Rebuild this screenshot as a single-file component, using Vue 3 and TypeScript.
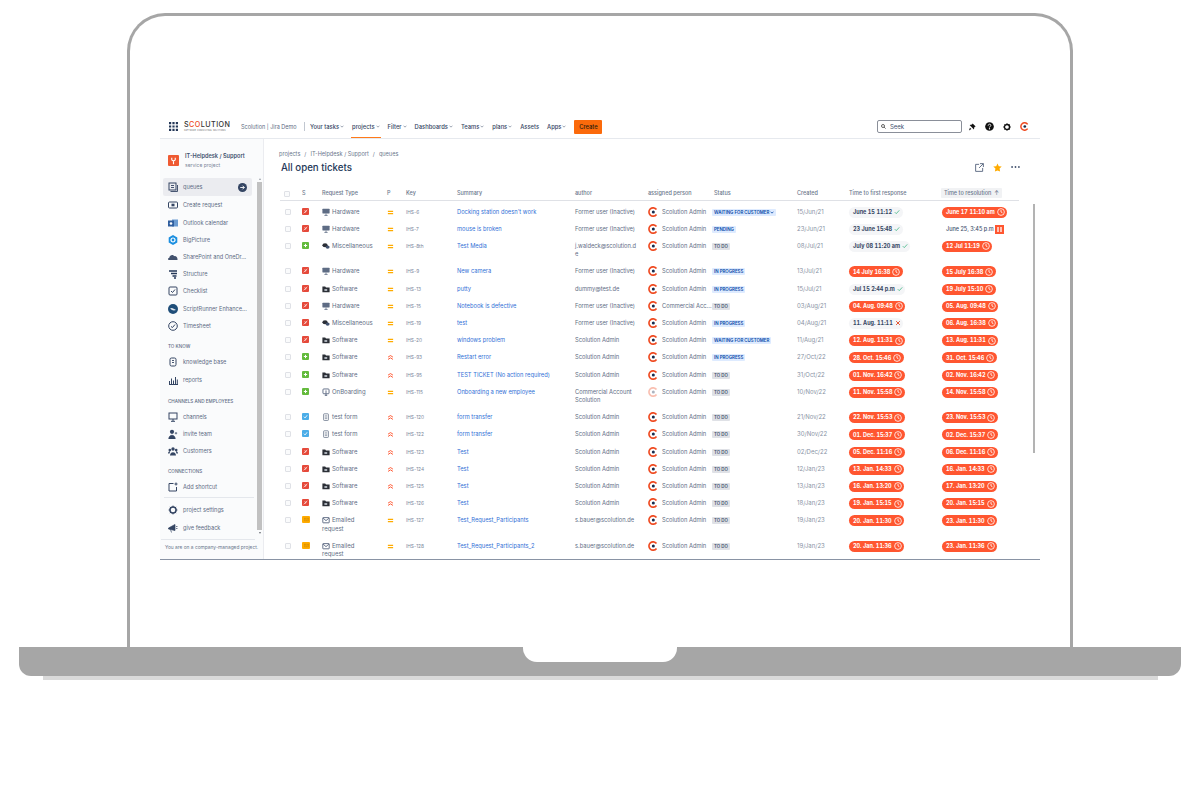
<script setup lang="ts">
type Ticket = {
  kind: 'bug' | 'add' | 'task' | 'mail'
  reqIcon: 'monitor' | 'folder' | 'chat' | 'board' | 'form' | 'mail'
  reqType: string
  prio: 'medium' | 'high'
  key: string
  summary: string
  author: string
  assignee: string
  fadedAvatar?: boolean
  status: string
  statusTone: 'blue' | 'grey'
  caret?: boolean
  created: string
  first: string
  firstState: 'ok' | 'fail' | 'late'
  res: string
  resPaused?: boolean
  tall?: boolean
}

const mainMenu = [
  { label: 'Your tasks', caret: true },
  { label: 'projects', caret: true, active: true },
  { label: 'Filter', caret: true },
  { label: 'Dashboards', caret: true },
  { label: 'Teams', caret: true },
  { label: 'plans', caret: true },
  { label: 'Assets', caret: false },
  { label: 'Apps', caret: true }
]

const admin = 'Scolution Admin'
const former = 'Former user (Inactive)'

function t(
  kind: Ticket['kind'], reqIcon: Ticket['reqIcon'], reqType: string, prio: Ticket['prio'], key: string,
  summary: string, author: string, status: string, created: string, first: string,
  firstState: Ticket['firstState'], res: string, extra: Partial<Ticket> = {}
): Ticket {
  const statusTone = status === 'TO DO' ? 'grey' : 'blue'
  return { kind, reqIcon, reqType, prio, key, summary, author, assignee: admin, status, statusTone, created, first, firstState, res, ...extra }
}

const tickets: Ticket[] = [
  t('bug', 'monitor', 'Hardware', 'medium', 'IHS-6', "Docking station doesn't work", former, 'WAITING FOR CUSTOMER', '15/Jun/21', 'June 15 11:12', 'ok', 'June 17 11:10 am', { caret: true }),
  t('bug', 'monitor', 'Hardware', 'medium', 'IHS-7', 'mouse is broken', former, 'PENDING', '23/Jun/21', '23 June 15:48', 'ok', 'June 25, 3:45 p.m', { resPaused: true }),
  t('add', 'chat', 'Miscellaneous', 'medium', 'IHS-8th', 'Test Media', 'j.waldeck@scolution.de', 'TO DO', '08/Jul/21', 'July 08 11:20 am', 'ok', '12 Jul 11:19', { tall: true }),
  t('bug', 'monitor', 'Hardware', 'medium', 'IHS-9', 'New camera', former, 'IN PROGRESS', '13/Jul/21', '14 July 16:38', 'late', '15 July 16:38'),
  t('bug', 'folder', 'Software', 'medium', 'IHS-13', 'putty', 'dummy@test.de', 'IN PROGRESS', '15/Jul/21', 'Jul 15 2:44 p.m', 'ok', '19 July 15:10'),
  t('bug', 'monitor', 'Hardware', 'medium', 'IHS-15', 'Notebook is defective', former, 'TO DO', '03/Aug/21', '04. Aug. 09:48', 'late', '05. Aug. 09:48', { assignee: 'Commercial Acc...' }),
  t('bug', 'chat', 'Miscellaneous', 'medium', 'IHS-19', 'test', former, 'IN PROGRESS', '04/Aug/21', '11. Aug. 11:11', 'fail', '06. Aug. 16:38'),
  t('bug', 'folder', 'Software', 'medium', 'IHS-20', 'windows problem', admin, 'WAITING FOR CUSTOMER', '11/Aug/21', '12. Aug. 11:31', 'late', '13. Aug. 11:31'),
  t('add', 'folder', 'Software', 'high', 'IHS-93', 'Restart error', admin, 'IN PROGRESS', '27/Oct/22', '28. Oct. 15:46', 'late', '31. Oct. 15:46'),
  t('add', 'folder', 'Software', 'high', 'IHS-95', 'TEST TICKET (No action required)', admin, 'TO DO', '31/Oct/22', '01. Nov. 16:42', 'late', '02. Nov. 16:42'),
  t('add', 'board', 'OnBoarding', 'medium', 'IHS-115', 'Onboarding a new employee', 'Commercial Account Scolution', 'TO DO', '10/Nov/22', '11. Nov. 15:58', 'late', '14. Nov. 15:58', { fadedAvatar: true, tall: true }),
  t('task', 'form', 'test form', 'high', 'IHS-120', 'form transfer', admin, 'TO DO', '21/Nov/22', '22. Nov. 15:53', 'late', '23. Nov. 15:53'),
  t('task', 'form', 'test form', 'high', 'IHS-122', 'form transfer', admin, 'TO DO', '30/Nov/22', '01. Dec. 15:37', 'late', '02. Dec. 15:37'),
  t('bug', 'folder', 'Software', 'high', 'IHS-123', 'Test', admin, 'TO DO', '02/Dec/22', '05. Dec. 11:16', 'late', '06. Dec. 11:16'),
  t('bug', 'folder', 'Software', 'high', 'IHS-124', 'Test', admin, 'TO DO', '12/Jan/23', '13. Jan. 14:33', 'late', '16. Jan. 14:33'),
  t('bug', 'folder', 'Software', 'high', 'IHS-125', 'Test', admin, 'TO DO', '13/Jan/23', '16. Jan. 13:20', 'late', '17. Jan. 13:20'),
  t('bug', 'folder', 'Software', 'high', 'IHS-126', 'Test', admin, 'TO DO', '18/Jan/23', '19. Jan. 15:15', 'late', '20. Jan. 15:15'),
  t('mail', 'mail', 'Emailed request', 'medium', 'IHS-127', 'Test_Request_Participants', 's.bauer@scolution.de', 'TO DO', '19/Jan/23', '20. Jan. 11:30', 'late', '23. Jan. 11:30', { tall: true }),
  t('mail', 'mail', 'Emailed request', 'medium', 'IHS-128', 'Test_Request_Participants_2', 's.bauer@scolution.de', 'TO DO', '19/Jan/23', '20. Jan. 11:36', 'late', '23. Jan. 11:36', { tall: true })
]

const columns = ['', 'S', 'Request Type', 'P', 'Key', 'Summary', 'author', 'assigned person', 'Status', 'Created', 'Time to first response']
</script>

<template>
  <div class="page">
    <div class="lid">
      <div class="screen">
        <header class="topbar">
          <svg class="apps" viewBox="0 0 9 9" width="9" height="9">
            <path fill="#253858" d="M0 0h2.2v2.2H0zM3.4 0h2.2v2.2H3.4zM6.8 0H9v2.2H6.8zM0 3.4h2.2v2.2H0zM3.4 3.4h2.2v2.2H3.4zM6.8 3.4H9v2.2H6.8zM0 6.8h2.2V9H0zM3.4 6.8h2.2V9H3.4zM6.8 6.8H9V9H6.8z" />
          </svg>
          <div class="brand">
            <div class="brand__word">S<span class="brand__hot">CO</span>LUTION</div>
            <div class="brand__tag">SOFTWARE. CONSULTING. SOLUTIONS</div>
          </div>
          <span class="site">Scolution | Jira Demo</span>
          <span class="divider" />
          <nav class="menu">
            <span v-for="m in mainMenu" :key="m.label" class="menu__item" :class="{ 'menu__item--on': m.active }">
              {{ m.label }}
              <svg v-if="m.caret" viewBox="0 0 6 4" width="4" height="3"><path d="M.8.8 3 3l2.2-2.2" fill="none" stroke="currentColor" stroke-width="1" /></svg>
            </span>
          </nav>
          <button type="button" class="create">Create</button>
          <div class="search">
            <svg viewBox="0 0 10 10" width="5" height="5"><circle cx="4" cy="4" r="3" fill="none" stroke="#222" stroke-width="1.4" /><path d="m6.2 6.2 3 3" stroke="#222" stroke-width="1.4" /></svg>
            <span>Seek</span>
          </div>
          <svg class="top-icon" viewBox="0 0 10 10" width="8" height="8"><path fill="#111" d="M5.8.6 9.6 4.400 8 5l-.6 3L2 2.600 5 2zM2.400 5.800 4.200 7.600 1.200 9.400z" /></svg>
          <svg class="top-icon" viewBox="0 0 10 10" width="9" height="9"><circle cx="5" cy="5" r="4.800" fill="#111" /><path d="M3.500 4c0-2 3-2 3-.2 0 1.100-1.500 1.100-1.500 2.300" fill="none" stroke="#fff" stroke-width="1" /><circle cx="5" cy="7.500" r=".7" fill="#fff" /></svg>
          <svg class="top-icon" viewBox="0 0 10 10" width="8" height="8"><circle cx="5" cy="5" r="3.200" fill="none" stroke="#111" stroke-width="1.800" /><path d="M5 .4v1.400M5 8.200v1.400M.4 5h1.400M8.200 5h1.400M1.800 1.800l1 1M7.200 7.200l1 1M8.200 1.800l-1 1M2.800 7.200l-1 1" stroke="#111" stroke-width="1.200" /></svg>
          <svg class="top-icon top-icon--last" viewBox="0 0 12 12" width="9" height="9"><path d="M10.200 3.100A5 5 0 1 0 10.200 8.900" fill="none" stroke="#ef4b22" stroke-width="2" /><circle cx="6.400" cy="6" r="1.800" fill="#172b4d" /></svg>
        </header>

        <div class="body">
          <aside class="side">
            <div class="project">
              <span class="project__logo">
                <svg viewBox="0 0 10 11" width="7" height="8"><path d="M2.500.8v2.700c0 1.200 1 1.800 2.500 1.800s2.500-.6 2.500-1.800V.8M5 5.300V10" fill="none" stroke="#fff" stroke-width="1.600" /></svg>
              </span>
              <div>
                <div class="project__name">IT-Helpdesk / Support</div>
                <div class="project__type">service project</div>
              </div>
            </div>

            <div class="side__scroll">
              <div class="side__list">
                <a class="nav nav--on">
                  <svg viewBox="0 0 10 10" class="nav__ico"><rect x="1" y="1" width="7" height="7" fill="none" stroke="#344563" stroke-width="1" /><path d="M3 3.500h3M3 5.500h3M2.500 9.500h7V3" fill="none" stroke="#344563" stroke-width=".9" /></svg>
                  queues
                  <svg viewBox="0 0 10 10" class="nav__go"><circle cx="5" cy="5" r="5" fill="#344563" /><path d="M2.500 5h4.500M5 3l2 2-2 2" fill="none" stroke="#fff" stroke-width="1" /></svg>
                </a>
                <a class="nav"><svg viewBox="0 0 10 10" class="nav__ico"><rect x=".5" y="2" width="9" height="6" rx="1" fill="none" stroke="#344563" stroke-width="1" /><rect x="3.500" y="3.700" width="3" height="2.600" fill="#344563" /></svg>Create request</a>
                <a class="nav"><svg viewBox="0 0 10 10" class="nav__ico"><rect x="4" y="1.500" width="6" height="7" fill="#6b9bd1" /><rect x="0" y="2.500" width="6" height="6" fill="#2f5e9e" /><circle cx="3" cy="5.500" r="1.300" fill="#fff" /></svg>Outlook calendar</a>
                <a class="nav"><svg viewBox="0 0 10 10" class="nav__ico"><path d="M5 0 9.300 2.500v5L5 10 .7 7.500v-5z" fill="#1b8fe0" /><circle cx="5" cy="5" r="2" fill="none" stroke="#fff" stroke-width="1.200" /></svg>BigPicture</a>
                <a class="nav"><svg viewBox="0 0 10 10" class="nav__ico"><path d="M1 8c-1.300 0-1.300-2.200.3-2.300C1.700 3 5 2 6.200 4.200 8 3.700 9.800 5.500 9.500 8z" fill="#42526e" /></svg>SharePoint and OneDr...</a>
                <a class="nav"><svg viewBox="0 0 10 10" class="nav__ico"><path d="M1 2h8M3 4.500h6M4.500 7h4M6 9h2" stroke="#253858" stroke-width="1.300" /></svg>Structure</a>
                <a class="nav"><svg viewBox="0 0 10 10" class="nav__ico"><rect x="1" y="1" width="8" height="8" rx="1" fill="none" stroke="#344563" stroke-width="1" /><path d="m3 5 1.500 1.500L7 3.500" fill="none" stroke="#344563" stroke-width="1" /></svg>Checklist</a>
                <a class="nav"><svg viewBox="0 0 10 10" class="nav__ico"><circle cx="5" cy="5" r="5" fill="#1f4e79" /><path d="M2 4.500c2-1.500 3.500 0 6 1.500-2 1-4 .5-6-1.500z" fill="#dfe6ee" /></svg>ScriptRunner Enhance...</a>
                <a class="nav"><svg viewBox="0 0 10 10" class="nav__ico"><circle cx="5" cy="5" r="4.300" fill="none" stroke="#344563" stroke-width="1" /><path d="m3 5.500 1.500 1L7 3.500" fill="none" stroke="#344563" stroke-width="1" /></svg>Timesheet</a>

                <div class="group group--know">TO KNOW</div>
                <a class="nav nav--gap"><svg viewBox="0 0 10 10" class="nav__ico"><rect x="2" y="1" width="6" height="8" rx="1.500" fill="none" stroke="#344563" stroke-width="1" /><path d="M4 3.500h2M4 5.500h2" stroke="#344563" stroke-width=".9" /></svg>knowledge base</a>
                <a class="nav nav--gap"><svg viewBox="0 0 10 10" class="nav__ico"><path d="M1 9.500h9M1.500 6v3M3.500 3.500V9M5.500 5.500V9M7.500 2V9M9.300 4.500V9" stroke="#344563" stroke-width="1" /></svg>reports</a>

                <div class="group group--wide">CHANNELS AND EMPLOYEES</div>
                <a class="nav"><svg viewBox="0 0 10 10" class="nav__ico"><rect x="1" y="1" width="8" height="6" fill="none" stroke="#344563" stroke-width="1" /><path d="M5 7v2M3 9.300h4" stroke="#344563" stroke-width="1" /></svg>channels</a>
                <a class="nav"><svg viewBox="0 0 10 10" class="nav__ico"><circle cx="4" cy="2.800" r="2.100" fill="#344563" /><path d="M.8 10c0-5 6.400-5 6.400 0zM8 3v2.400M6.800 4.200h2.400" fill="#344563" stroke="#344563" stroke-width=".7" /></svg>invite team</a>
                <a class="nav"><svg viewBox="0 0 10 10" class="nav__ico"><circle cx="5" cy="3" r="1.700" fill="#344563" /><circle cx="1.800" cy="4" r="1.300" fill="#344563" /><circle cx="8.200" cy="4" r="1.300" fill="#344563" /><path d="M2 9.500c0-4.500 6-4.500 6 0zM0 7.500c0-2 1.500-2.500 2.300-2.300L1.500 7.500zM10 7.500c0-2-1.500-2.500-2.300-2.300l.8 2.300z" fill="#344563" /></svg>Customers</a>

                <div class="group group--conn">CONNECTIONS</div>
                <a class="nav"><svg viewBox="0 0 10 10" class="nav__ico"><path d="M5.500 1.500H1v7.500h7.500V5M8 .5v3M6.500 2h3" fill="none" stroke="#344563" stroke-width="1" /></svg>Add shortcut</a>
                <div class="side__rule" />
                <a class="nav nav--low"><svg viewBox="0 0 10 10" class="nav__ico"><circle cx="5" cy="5" r="3" fill="none" stroke="#344563" stroke-width="1.500" /><path d="M5 .6v1.400M5 8v1.400M.6 5H2M8 5h1.400M1.900 1.900l1 1M7.100 7.100l1 1M8.100 1.900l-1 1M2.900 7.100l-1 1" stroke="#344563" stroke-width="1" /></svg>project settings</a>
                <a class="nav nav--low"><svg viewBox="0 0 10 10" class="nav__ico"><path d="M.5 5 7 1.500v6L.5 6zM2.500 6.500 3.500 9.500M8 3.500h1.500M8 5.500h1.500" fill="#344563" stroke="#344563" stroke-width=".7" /></svg>give feedback</a>
              </div>
              <div class="side__bar"><span /></div>
            </div>
            <div class="side__foot">You are on a company-managed project.</div>
          </aside>

          <main class="main">
            <div class="crumbs"><span>projects</span><span>/</span><span>IT-Helpdesk / Support</span><span>/</span><span>queues</span></div>
            <div class="title-row">
              <h1>All open tickets</h1>
              <div class="title-row__tools">
                <svg viewBox="0 0 10 10" width="9" height="9"><path d="M8.500 5.500v3.800H.7V1.500h3.800M5.500.7h3.800v3.800M9.200.8 4.500 5.500" fill="none" stroke="#42526e" stroke-width=".9" /></svg>
                <svg viewBox="0 0 10 10" width="9" height="9"><path d="m5 .5 1.400 3 3.300.4-2.400 2.200.6 3.300L5 8.200 2.100 9.400l.6-3.300L.3 3.900l3.300-.4z" fill="#ffab00" /></svg>
                <svg viewBox="0 0 10 4" width="9" height="4"><circle cx="1.200" cy="2" r="1" fill="#42526e" /><circle cx="5" cy="2" r="1" fill="#42526e" /><circle cx="8.800" cy="2" r="1" fill="#42526e" /></svg>
              </div>
            </div>

            <div class="table">
              <div class="grid head">
                <span v-for="(c, i) in columns" :key="i" class="head__cell">
                  <i v-if="i === 0" class="check" />
                  <template v-else>{{ c }}</template>
                </span>
                <span class="head__cell"><b class="sorted">Time to resolution &nbsp;↑</b></span>
              </div>

              <div v-for="row in tickets" :key="row.key" class="grid row" :class="{ 'row--tall': row.tall }">
                <span class="cell"><i class="check" /></span>
                <span class="cell">
                  <span class="kind" :class="`kind--${row.kind}`">
                    <svg viewBox="0 0 6 6" width="5" height="5">
                      <path v-if="row.kind === 'bug'" d="M.8 5 5.200 1M2 1.500 3.500 3 2.500 4.500" fill="none" stroke="#fff" stroke-width=".8" />
                      <path v-else-if="row.kind === 'add'" d="M3 1v4M1 3h4" stroke="#fff" stroke-width="1.200" />
                      <path v-else-if="row.kind === 'task'" d="m1 3.200 1.500 1.500L5 1.500" fill="none" stroke="#fff" stroke-width="1" />
                      <path v-else d="M.5 1.500h5v3h-5zM.5 1.500 3 3.500l2.500-2" fill="none" stroke="#c98600" stroke-width=".6" />
                    </svg>
                  </span>
                </span>
                <span class="cell req">
                  <svg class="req__ico" viewBox="0 0 10 10" width="8" height="8">
                    <g v-if="row.reqIcon === 'monitor'"><rect x=".5" y="1" width="9" height="6" rx=".6" fill="#5e6c84" /><path d="M5 7v2M3 9.300h4" stroke="#5e6c84" stroke-width="1" /></g>
                    <g v-else-if="row.reqIcon === 'folder'"><path d="M.5 2h3.500l1 1.200h4.500v6H.5z" fill="#2b2f36" /><rect x="3" y="5" width="3.500" height="2.500" fill="#aab0b8" /></g>
                    <g v-else-if="row.reqIcon === 'chat'"><ellipse cx="3.800" cy="4" rx="3.300" ry="2.500" fill="#2b2f36" /><ellipse cx="7" cy="6.300" rx="2.500" ry="2" fill="#42526e" /></g>
                    <g v-else-if="row.reqIcon === 'board'"><rect x="1.200" y="1.200" width="7.600" height="6" rx="1" fill="none" stroke="#42526e" stroke-width="1" /><path d="M5 3v3.200M3.500 9.200h3M5 7v2" stroke="#42526e" stroke-width="1" /></g>
                    <g v-else-if="row.reqIcon === 'form'"><rect x="2" y="1" width="6" height="8.300" rx=".8" fill="none" stroke="#6b778c" stroke-width="1" /><path d="M3.500 3.500h3M3.500 5.200h3M3.500 7h3" stroke="#6b778c" stroke-width=".8" /></g>
                    <g v-else><rect x="1" y="2" width="8" height="6.500" rx=".5" fill="none" stroke="#42526e" stroke-width="1" /><path d="m1.500 2.800 3.500 3 3.500-3" fill="none" stroke="#42526e" stroke-width="1" /></g>
                  </svg>{{ row.reqType }}
                </span>
                <span class="cell">
                  <svg viewBox="0 0 8 8" width="7" height="7" class="prio">
                    <path v-if="row.prio === 'medium'" d="M1 2.700h6M1 5.300h6" stroke="#ffab00" stroke-width="1.200" />
                    <path v-else d="M1.200 3.600 4 1.800l2.800 1.800M1.200 6.200 4 4.400l2.800 1.800" fill="none" stroke="#ff5630" stroke-width="1.100" />
                  </svg>
                </span>
                <span class="cell key">{{ row.key }}</span>
                <span class="cell summary">{{ row.summary }}</span>
                <span class="cell author">{{ row.author }}</span>
                <span class="cell person">
                  <svg viewBox="0 0 12 12" width="10" height="10" :class="{ faded: row.fadedAvatar }"><path d="M10.200 3.100A5 5 0 1 0 10.200 8.900" fill="none" stroke="#ef4b22" stroke-width="2" /><circle cx="6.400" cy="6" r="1.800" fill="#172b4d" /></svg>
                  <span>{{ row.assignee }}</span>
                </span>
                <span class="cell">
                  <span class="lozenge" :class="`lozenge--${row.statusTone}`">{{ row.status }}<svg v-if="row.caret" viewBox="0 0 6 4" width="4" height="3"><path d="M.8.8 3 3l2.200-2.200" fill="none" stroke="#0747a6" stroke-width="1.200" /></svg></span>
                </span>
                <span class="cell created">{{ row.created }}</span>
                <span class="cell">
                  <span class="sla" :class="row.firstState === 'late' ? 'sla--late' : 'sla--calm'">
                    {{ row.first }}
                    <svg v-if="row.firstState === 'late'" class="sla__clock" viewBox="0 0 10 10" width="8" height="8"><circle cx="5" cy="5" r="4.200" fill="none" stroke="#fff" stroke-width="1" /><path d="M5 2.500V5l1.800 1" fill="none" stroke="#fff" stroke-width="1" /></svg>
                    <svg v-else-if="row.firstState === 'ok'" class="sla__mark" viewBox="0 0 8 8" width="6" height="6"><path d="m1 4.200 2 2 4-4.400" fill="none" stroke="#36b37e" stroke-width="1" /></svg>
                    <svg v-else class="sla__mark" viewBox="0 0 8 8" width="6" height="6"><path d="m1.500 1.500 5 5M6.500 1.500l-5 5" fill="none" stroke="#de350b" stroke-width="1.100" /></svg>
                  </span>
                </span>
                <span class="cell">
                  <span v-if="row.resPaused" class="paused">
                    {{ row.res }}
                    <svg viewBox="0 0 9 9" width="9" height="9"><rect width="9" height="9" fill="#ff5630" /><path d="M3 2v5M6 2v5" stroke="#fff" stroke-width="1.300" /></svg>
                  </span>
                  <span v-else class="sla sla--late">
                    {{ row.res }}
                    <svg class="sla__clock" viewBox="0 0 10 10" width="8" height="8"><circle cx="5" cy="5" r="4.200" fill="none" stroke="#fff" stroke-width="1" /><path d="M5 2.500V5l1.800 1" fill="none" stroke="#fff" stroke-width="1" /></svg>
                  </span>
                </span>
              </div>
            </div>
          </main>
          <div class="main-bar" />
        </div>
      </div>
    </div>
    <div class="base"><span class="base__notch" /></div>
    <div class="base-shadow" />
  </div>
</template>

<style>
html, body { background: #fff; }
</style>

<style scoped>
.page {
  width: 1200px;
  height: 790px;
  overflow: hidden;
  display: flex;
  flex-direction: column;
  align-items: center;
  padding-top: 13px;
  box-sizing: border-box;
  font-family: Inter, "Liberation Sans", sans-serif;
  background: #fff;
  color: #42526e;
}
.lid {
  width: 946px;
  height: 634px;
  flex: none;
  box-sizing: border-box;
  border: 3px solid #a6a6a6;
  border-bottom: 0;
  border-radius: 38px 38px 0 0;
  padding: 99px 30px 0;
}
.screen {
  width: 880px;
  height: 445px;
  border-bottom: 1px solid #8993a4;
  box-sizing: border-box;
  display: flex;
  flex-direction: column;
  background: #fff;
}
.base {
  width: 1162px;
  height: 29px;
  flex: none;
  background: #a6a6a6;
  border-radius: 0 0 12px 12px;
  display: flex;
  justify-content: center;
}
.base__notch {
  width: 154px;
  height: 15px;
  background: #fff;
  border-radius: 0 0 14px 14px;
}
.base-shadow {
  width: 1115px;
  height: 4px;
  flex: none;
  background: #d9d9d9;
}

.topbar {
  height: 24px;
  flex: none;
  box-sizing: border-box;
  border-bottom: 1px solid #e6e9ee;
  display: flex;
  align-items: center;
  padding: 0 11px 0 9px;
  font-size: 5.800px;
  color: #344563;
}
.apps { flex: none; margin-right: 6px; }
.brand { width: 47px; margin-right: 10px; flex: none; }
.brand__word { font-size: 7.200px; font-weight: 500; letter-spacing: .45px; line-height: 8px; color: #333; }
.brand__hot { color: #ef4b22; }
.brand__tag { font-size: 2px; line-height: 3px; letter-spacing: .12px; color: #666; white-space: nowrap; }
.site { width: 63px; flex: none; white-space: nowrap; color: #5e6c84; font-size: 5.500px; }
.divider { width: 1px; height: 9px; background: #c1c7d0; flex: none; margin-right: 4px; }
.menu { display: flex; height: 100%; gap: 6px; margin-right: 7px; }
.menu__item {
  display: flex;
  align-items: center;
  gap: 1px;
  height: 100%;
  box-sizing: border-box;
  font-weight: 500;
  white-space: nowrap;
  color: #344563;
  padding: 0 1px;
  border-bottom: 1px solid transparent;
}
.menu__item svg { color: #6b778c; }
.menu__item--on { border-bottom-color: #ff7a1a; }
.create {
  width: 28px;
  height: 14px;
  flex: none;
  padding: 0;
  border: 0;
  border-radius: 1px;
  background: #fb6a0b;
  color: #2a1a0e;
  font: 500 5.800px Inter, "Liberation Sans", sans-serif;
  margin-right: auto;
}
.search {
  width: 85px;
  height: 13px;
  box-sizing: border-box;
  border: 1px solid #8a8f99;
  border-radius: 2px;
  display: flex;
  align-items: center;
  gap: 4px;
  padding-left: 3px;
  font-size: 6px;
  color: #42526e;
}
.top-icon { flex: none; margin-left: 9px; }
.search + .top-icon { margin-left: 6px; }

.body { flex: 1; min-height: 0; display: flex; position: relative; }
.side {
  width: 104px;
  flex: none;
  box-sizing: border-box;
  background: #fafbfc;
  border-right: 1px solid #ebecf0;
  display: flex;
  flex-direction: column;
}
.project { height: 39px; flex: none; display: flex; gap: 6px; padding: 16px 0 0 8px; box-sizing: border-box; }
.project__logo {
  width: 11px;
  height: 11px;
  border-radius: 1px;
  background: #ef5a32;
  display: flex;
  align-items: center;
  justify-content: center;
  flex: none;
}
.project__name { font-size: 5.600px; line-height: 8px; font-weight: 600; color: #42526e; white-space: nowrap; margin-top: -3px; }
.project__type { font-size: 5px; line-height: 10px; color: #7a869a; }
.side__scroll { flex: 1; min-height: 0; display: flex; }
.side__list { width: 96px; flex: none; padding: 0 0 0 3px; box-sizing: border-box; }
.side__bar {
  width: 5px;
  margin-left: 1px;
  display: flex;
  flex-direction: column;
  align-items: center;
  gap: 2px;
}
.side__bar::before,
.side__bar::after {
  content: "";
  border-left: 1.500px solid transparent;
  border-right: 1.500px solid transparent;
}
.side__bar::before { border-bottom: 2px solid #9aa0a6; }
.side__bar::after { border-top: 2px solid #6b6f75; }
.side__bar span { display: block; width: 5px; height: 348px; background: #c1c1c1; }
.nav {
  display: flex;
  align-items: center;
  height: 17.200px;
  padding-left: 20px;
  font-size: 5.600px;
  position: relative;
  color: #5e6c84;
  white-space: nowrap;
}
.nav--on { height: 18px; margin-bottom: .8px; width: 89px; box-sizing: border-box; background: #ebecf0; border-radius: 2px; }
.nav--gap { height: 18.500px; }
.nav--low { height: 18px; }
.nav__ico { position: absolute; left: 5px; width: 10px; height: 10px; }
.nav__go { position: absolute; right: 5px; width: 9px; height: 9px; }
.group { box-sizing: border-box; padding-left: 5px; font-size: 4.600px; line-height: 10px; font-weight: 500; color: #5e6c84; white-space: nowrap; }
.group--know { height: 18.150px; padding-top: 7.400px; }
.group--wide { height: 19px; padding-top: 8px; }
.group--conn { height: 18.200px; padding-top: 6.600px; }
.side__rule { height: 1px; margin: 2px 2px 3px 1px; background: #e4e7ec; width: 90px; }
.side__foot {
  height: 20px;
  flex: none;
  box-sizing: border-box;
  margin: 0 8px 0 1px;
  border-top: 1px solid #e4e7ec;
  padding: 3px 0 0 4px;
  font-size: 4.850px;
  line-height: 9px;
  color: #6b778c;
  white-space: nowrap;
}

.main { flex: 1; min-width: 0; padding: 11px 0 0 15px; box-sizing: border-box; }
.crumbs { display: flex; gap: 4px; font-size: 5.600px; line-height: 9px; color: #6b778c; }
.title-row { display: flex; align-items: center; height: 16px; padding: 0 20px 0 2px; margin-bottom: 11px; }
.title-row h1 { margin: 0; font-size: 9.700px; font-weight: 500; color: #253858; }
.title-row__tools { margin-left: auto; display: flex; align-items: center; gap: 9px; }
.table { width: 739px; margin-left: 1px; }
.grid {
  display: grid;
  grid-template-columns: 20px 20px 65px 19px 51px 118px 73px 64px 85px 52px 93px 79px;
  padding-left: 0;
}
.head {
  height: 14px;
  align-items: center;
  border-bottom: 1px solid #dfe1e6;
  font-size: 5.500px;
  font-weight: 500;
  color: #6b778c;
  margin-bottom: 1.500px;
}
.head__cell { padding-left: 2px; white-space: nowrap; }
.head__cell .check { margin-left: 2px; }
.head__cell:nth-child(9) { padding-left: 4px; }
.sorted { font-weight: 500; background: #f1f2f4; padding: 2px 3px; border-radius: 1px; margin-left: -1px; }
.row { height: 17.200px; }
.row--tall { height: 25.500px; }
.cell {
  padding: 5px 0 0 2px;
  font-size: 5.750px;
  line-height: 8.400px;
  color: #5e6c84;
  min-width: 0;
}
.check {
  display: block;
  width: 6px;
  height: 6px;
  box-sizing: border-box;
  border: 1px solid #dfe1e6;
  border-radius: 1px;
  background: #fafbfc;
  margin: 1px 0 0 3px;
}
.kind {
  display: flex;
  align-items: center;
  justify-content: center;
  width: 7px;
  height: 7px;
  border-radius: 1px;
}
.kind--bug { background: #e5493a; }
.kind--add { background: #63ba3c; }
.kind--task { background: #4bade8; }
.kind--mail { background: #ffab00; width: 8px; }
.req { width: 57px; box-sizing: border-box; font-size: 6px; }
.req__ico { vertical-align: -2px; margin-right: 2px; }
.prio { display: block; margin-top: 1px; }
.key { font-size: 4.800px; color: #7a869a; }
.summary { color: #2f6fd6; white-space: nowrap; }
.author { overflow-wrap: anywhere; width: 63px; }
.person { display: flex; align-items: flex-start; gap: 4px; white-space: nowrap; }
.person svg { flex: none; margin-top: -1px; }
.faded { opacity: .35; }
.lozenge {
  display: inline-flex;
  align-items: center;
  gap: 1px;
  height: 7px;
  padding: 0 2px;
  border-radius: 1px;
  font-size: 4.400px;
  font-weight: 600;
  line-height: 7px;
  white-space: nowrap;
  vertical-align: 0;
}
.lozenge--blue { background: #deebff; color: #0747a6; }
.lozenge--grey { background: #dfe1e6; color: #42526e; }
.created { font-size: 6px; color: #8993a4; }
.sla {
  display: inline-flex;
  align-items: center;
  gap: 2px;
  height: 11px;
  padding: 0 2.500px 0 4px;
  margin-top: -1px;
  border-radius: 6px;
  font-size: 5.500px;
  font-weight: 700;
  font-variant-numeric: tabular-nums;
  white-space: nowrap;
}
.sla--late { background: #ff5630; color: #fff; }
.sla--calm { background: #f4f5f7; color: #344563; }
.paused { display: inline-flex; align-items: center; gap: 1px; padding-left: 4px; font-size: 5.500px; font-weight: 500; color: #42526e; white-space: nowrap; }
.main-bar {
  position: absolute;
  left: 873px;
  top: 65px;
  width: 2px;
  height: 249px;
  background: #b3b3b3;
}
</style>
